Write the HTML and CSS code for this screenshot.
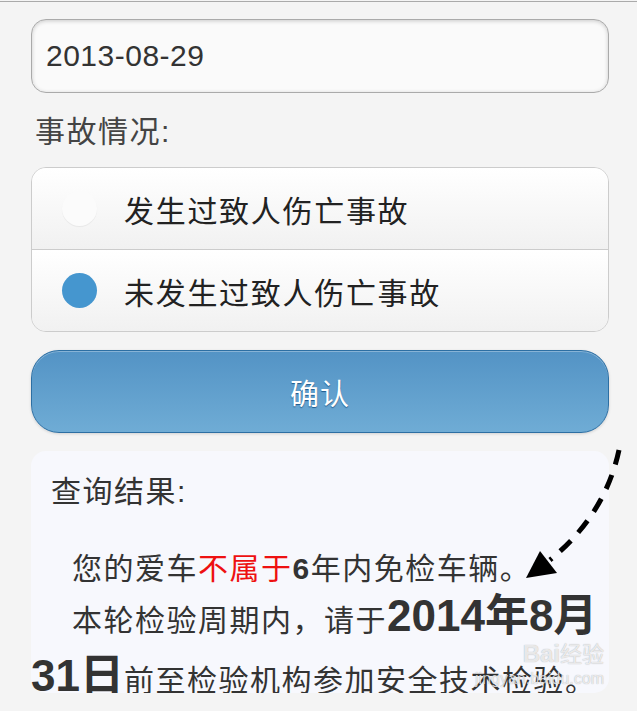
FILE: index.html
```html
<!DOCTYPE html>
<html lang="zh-CN">
<head>
    <meta charset="UTF-8">
    <meta name="viewport" content="width=device-width, initial-scale=1.0">
    <title>检验周期查询</title>
    <link rel="stylesheet" href="styles.css">
</head>
<body>
    <div class="top-line"></div>
    <div class="container">
        <input type="text" class="date-input" value="2013-08-29">

        <p class="field-label">事故情况:</p>

        <div class="radio-group">
            <label class="radio-item">
                <input type="radio" name="accident" value="1">
                <span class="radio-icon"></span>
                <span class="radio-text">发生过致人伤亡事故</span>
            </label>
            <label class="radio-item">
                <input type="radio" name="accident" value="0" checked>
                <span class="radio-icon"></span>
                <span class="radio-text">未发生过致人伤亡事故</span>
            </label>
        </div>

        <button class="confirm-btn">确认</button>

        <!-- 查询结果 -->
        <div class="result">
            <h2 class="result-title">查询结果:</h2>
            <p class="result-line">您的爱车<span class="red">不属于</span><b>6</b>年内免检车辆。</p>
            <p class="result-line second">本轮检验周期内，请于<b class="big">2014年8月31日</b>前至检验机构参加安全技术检验。</p>
        </div>
    </div>

    <!-- annotation arrow -->
    <svg class="arrow" width="137" height="150" viewBox="0 0 137 150">
        <path d="M119 10 Q105 75 50 120" fill="none" stroke="#000" stroke-width="5" stroke-dasharray="15 11"/>
        <polygon points="26,138 40,111 57,133" fill="#000"/>
    </svg>

    <div class="watermark">
        <span class="wm-logo">Bai<span class="wm-cn">经验</span></span>
        <span class="wm-url">jingyan.baidu.com</span>
    </div>
</body>
</html>
```

FILE: styles.css
```css
body {
    margin: 0;
    background-color: #f4f4f4;
    font-family: "Liberation Sans", "Noto Sans CJK SC", sans-serif;
    color: #333;
}

.top-line {
    height: 1px;
    margin-top: 1px;
    background-color: #aaa;
}

.container {
    padding: 17px 28px 0 31px;
}

.date-input {
    display: block;
    box-sizing: border-box;
    width: 100%;
    height: 74px;
    padding: 0 14px;
    font-family: inherit;
    font-size: 30px;
    letter-spacing: 0.5px;
    color: #333;
    background-color: #fafafa;
    border: 1px solid #aaa;
    border-radius: 15px;
    box-shadow: inset 0 1px 4px rgba(0, 0, 0, 0.2);
    outline: none;
}

.field-label {
    margin: 21px 0 0 4px;
    font-size: 30px;
    line-height: 36px;
    letter-spacing: 1.5px;
    color: #444;
}

.radio-group {
    margin-top: 17px;
    border: 1px solid #ccc;
    border-radius: 15px;
    overflow: hidden;
}

.radio-item {
    display: flex;
    align-items: center;
    height: 81px;
    padding-left: 30px;
    background: linear-gradient(#fff, #f1f1f1);
    cursor: pointer;
}

.radio-item + .radio-item {
    border-top: 1px solid #ccc;
}

.radio-item input {
    display: none;
}

.radio-icon {
    flex: none;
    width: 35px;
    height: 35px;
    border-radius: 50%;
    background-color: #fbfbfb;
    box-shadow: 0 1px 1px rgba(0, 0, 0, 0.06);
}

.radio-item input:checked + .radio-icon {
    background-color: #4596cf;
    box-shadow: none;
}

.radio-text {
    margin-left: 27px;
    font-size: 30px;
    letter-spacing: 1.7px;
    color: #222;
}

.confirm-btn {
    display: block;
    box-sizing: border-box;
    width: 100%;
    height: 83px;
    margin-top: 18px;
    border: 1px solid #2d6fa3;
    border-radius: 28px;
    background: linear-gradient(#5393c5, #6facd5);
    color: #fff;
    font-family: inherit;
    font-size: 29px;
    letter-spacing: 1px;
    text-shadow: 0 1px 1px #1f5a8c;
    box-shadow: inset 0 1px 0 rgba(255, 255, 255, 0.3), 0 1px 3px rgba(0, 0, 0, 0.15);
    cursor: pointer;
}

.result {
    box-sizing: border-box;
    height: 242px;
    margin-top: 18px;
    padding: 23px 20px 0;
    background-color: #f7f8fd;
    border-radius: 15px;
}

.result-title {
    margin: 0;
    font-size: 30px;
    font-weight: normal;
    line-height: 36px;
    letter-spacing: 1.5px;
    color: #333;
}

.result-line {
    margin: 36px -20px 0;
    text-indent: 41px;
    font-size: 30px;
    line-height: 46px;
    letter-spacing: 1.5px;
    color: #333;
}

.result-line.second {
    margin-top: -4px;
    line-height: 55px;
}

.red {
    color: #ee1111;
}

.big {
    font-size: 44px;
    letter-spacing: 0;
}

.arrow {
    position: absolute;
    left: 500px;
    top: 440px;
}

.watermark {
    position: absolute;
    left: 488px;
    top: 640px;
    display: flex;
    flex-direction: column;
    align-items: flex-end;
    width: 116px;
    color: rgba(255, 255, 255, 0.75);
    text-shadow: 0 0 1px rgba(0, 0, 0, 0.35);
    pointer-events: none;
}

.wm-logo {
    font-size: 24px;
    font-weight: bold;
    line-height: 28px;
}

.wm-cn {
    font-size: 22px;
    font-weight: normal;
}

.wm-url {
    font-size: 16px;
    line-height: 20px;
}
```
